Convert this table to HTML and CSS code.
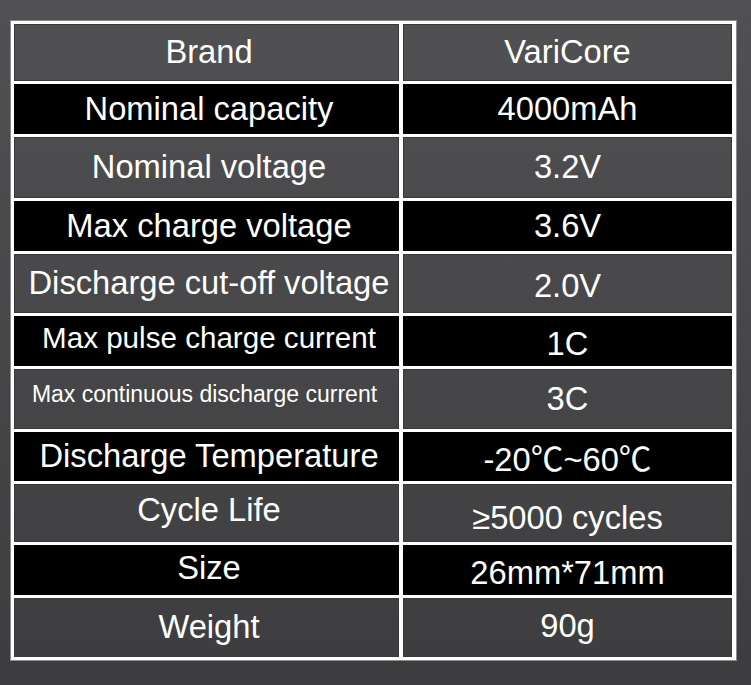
FILE: index.html
```html
<!DOCTYPE html>
<html>
<head>
<meta charset="utf-8">
<link rel="stylesheet" href="styles.css">
</head>
<body>
<div class="page">
  <div class="spec">
    <div class="cell g r1 lab">Brand</div><div class="cell g r1">VariCore</div>
    <div class="cell b r2 lab">Nominal capacity</div><div class="cell b r2">4000mAh</div>
    <div class="cell g r3 lab">Nominal voltage</div><div class="cell g r3">3.2V</div>
    <div class="cell b r4 lab">Max charge voltage</div><div class="cell b r4">3.6V</div>
    <div class="cell g r5 lab">Discharge cut-off voltage</div><div class="cell g r5 dn3">2.0V</div>
    <div class="cell b r6 lab sm up3">Max pulse charge current</div><div class="cell b r6 dn3">1C</div>
    <div class="cell g r7 xs up5">Max continuous discharge current</div><div class="cell g r7">3C</div>
    <div class="cell b r8 lab">Discharge Temperature</div><div class="cell b r8 dn5">-20℃~60℃</div>
    <div class="cell g r9 lab up3">Cycle Life</div><div class="cell g r9 dn6">≥5000 cycles</div>
    <div class="cell b r10 lab up2">Size</div><div class="cell b r10 dn3">26mm*71mm</div>
    <div class="cell g r11 lab">Weight</div><div class="cell g r11 up2">90g</div>
  </div>
</div>
</body>
</html>
```
FILE: styles.css
```css
html, body {
  margin: 0;
  padding: 0;
}
body {
  width: 751px;
  height: 685px;
  overflow: hidden;
  background: linear-gradient(180deg, #515153 0%, #474749 50%, #3d3d3f 100%) fixed;
  font-family: "Liberation Sans", Arial, "Noto Sans CJK SC", sans-serif;
  color: #ffffff;
}
.page {
  padding: 20px 0 0 10px;
}
.spec {
  width: 718px;
  border: 1px solid #8c8c8e;
  background: #ffffff;
  padding: 3px 4px 3px 3px;
  display: grid;
  grid-template-columns: 385px 329px;
  grid-template-rows: 57px 50px 61px 50px 59px 50px 60px 49px 58px 50px 59px;
  column-gap: 4px;
  row-gap: 3px;
}
.cell {
  display: flex;
  align-items: center;
  justify-content: center;
  font-size: 32.7px;
  line-height: 1;
  white-space: nowrap;
  box-sizing: border-box;
}
.cell.g {
  background: linear-gradient(180deg, #515153 0%, #474749 50%, #3d3d3f 100%) fixed;
  box-shadow: inset 0 0 0 1px #3a3a3c;
}
.cell.b {
  background: #000000;
}
.lab {
  padding-left: 5px;
}
.sm {
  font-size: 29.6px;
}
.xs {
  font-size: 23px;
  padding-right: 4px;
}
.up2 { padding-bottom: 3px; }
.up3 { padding-bottom: 6px; }
.up5 { padding-bottom: 10px; }
.dn3 { padding-top: 6px; }
.dn5 { padding-top: 8px; }
.dn6 { padding-top: 11px; }
```
